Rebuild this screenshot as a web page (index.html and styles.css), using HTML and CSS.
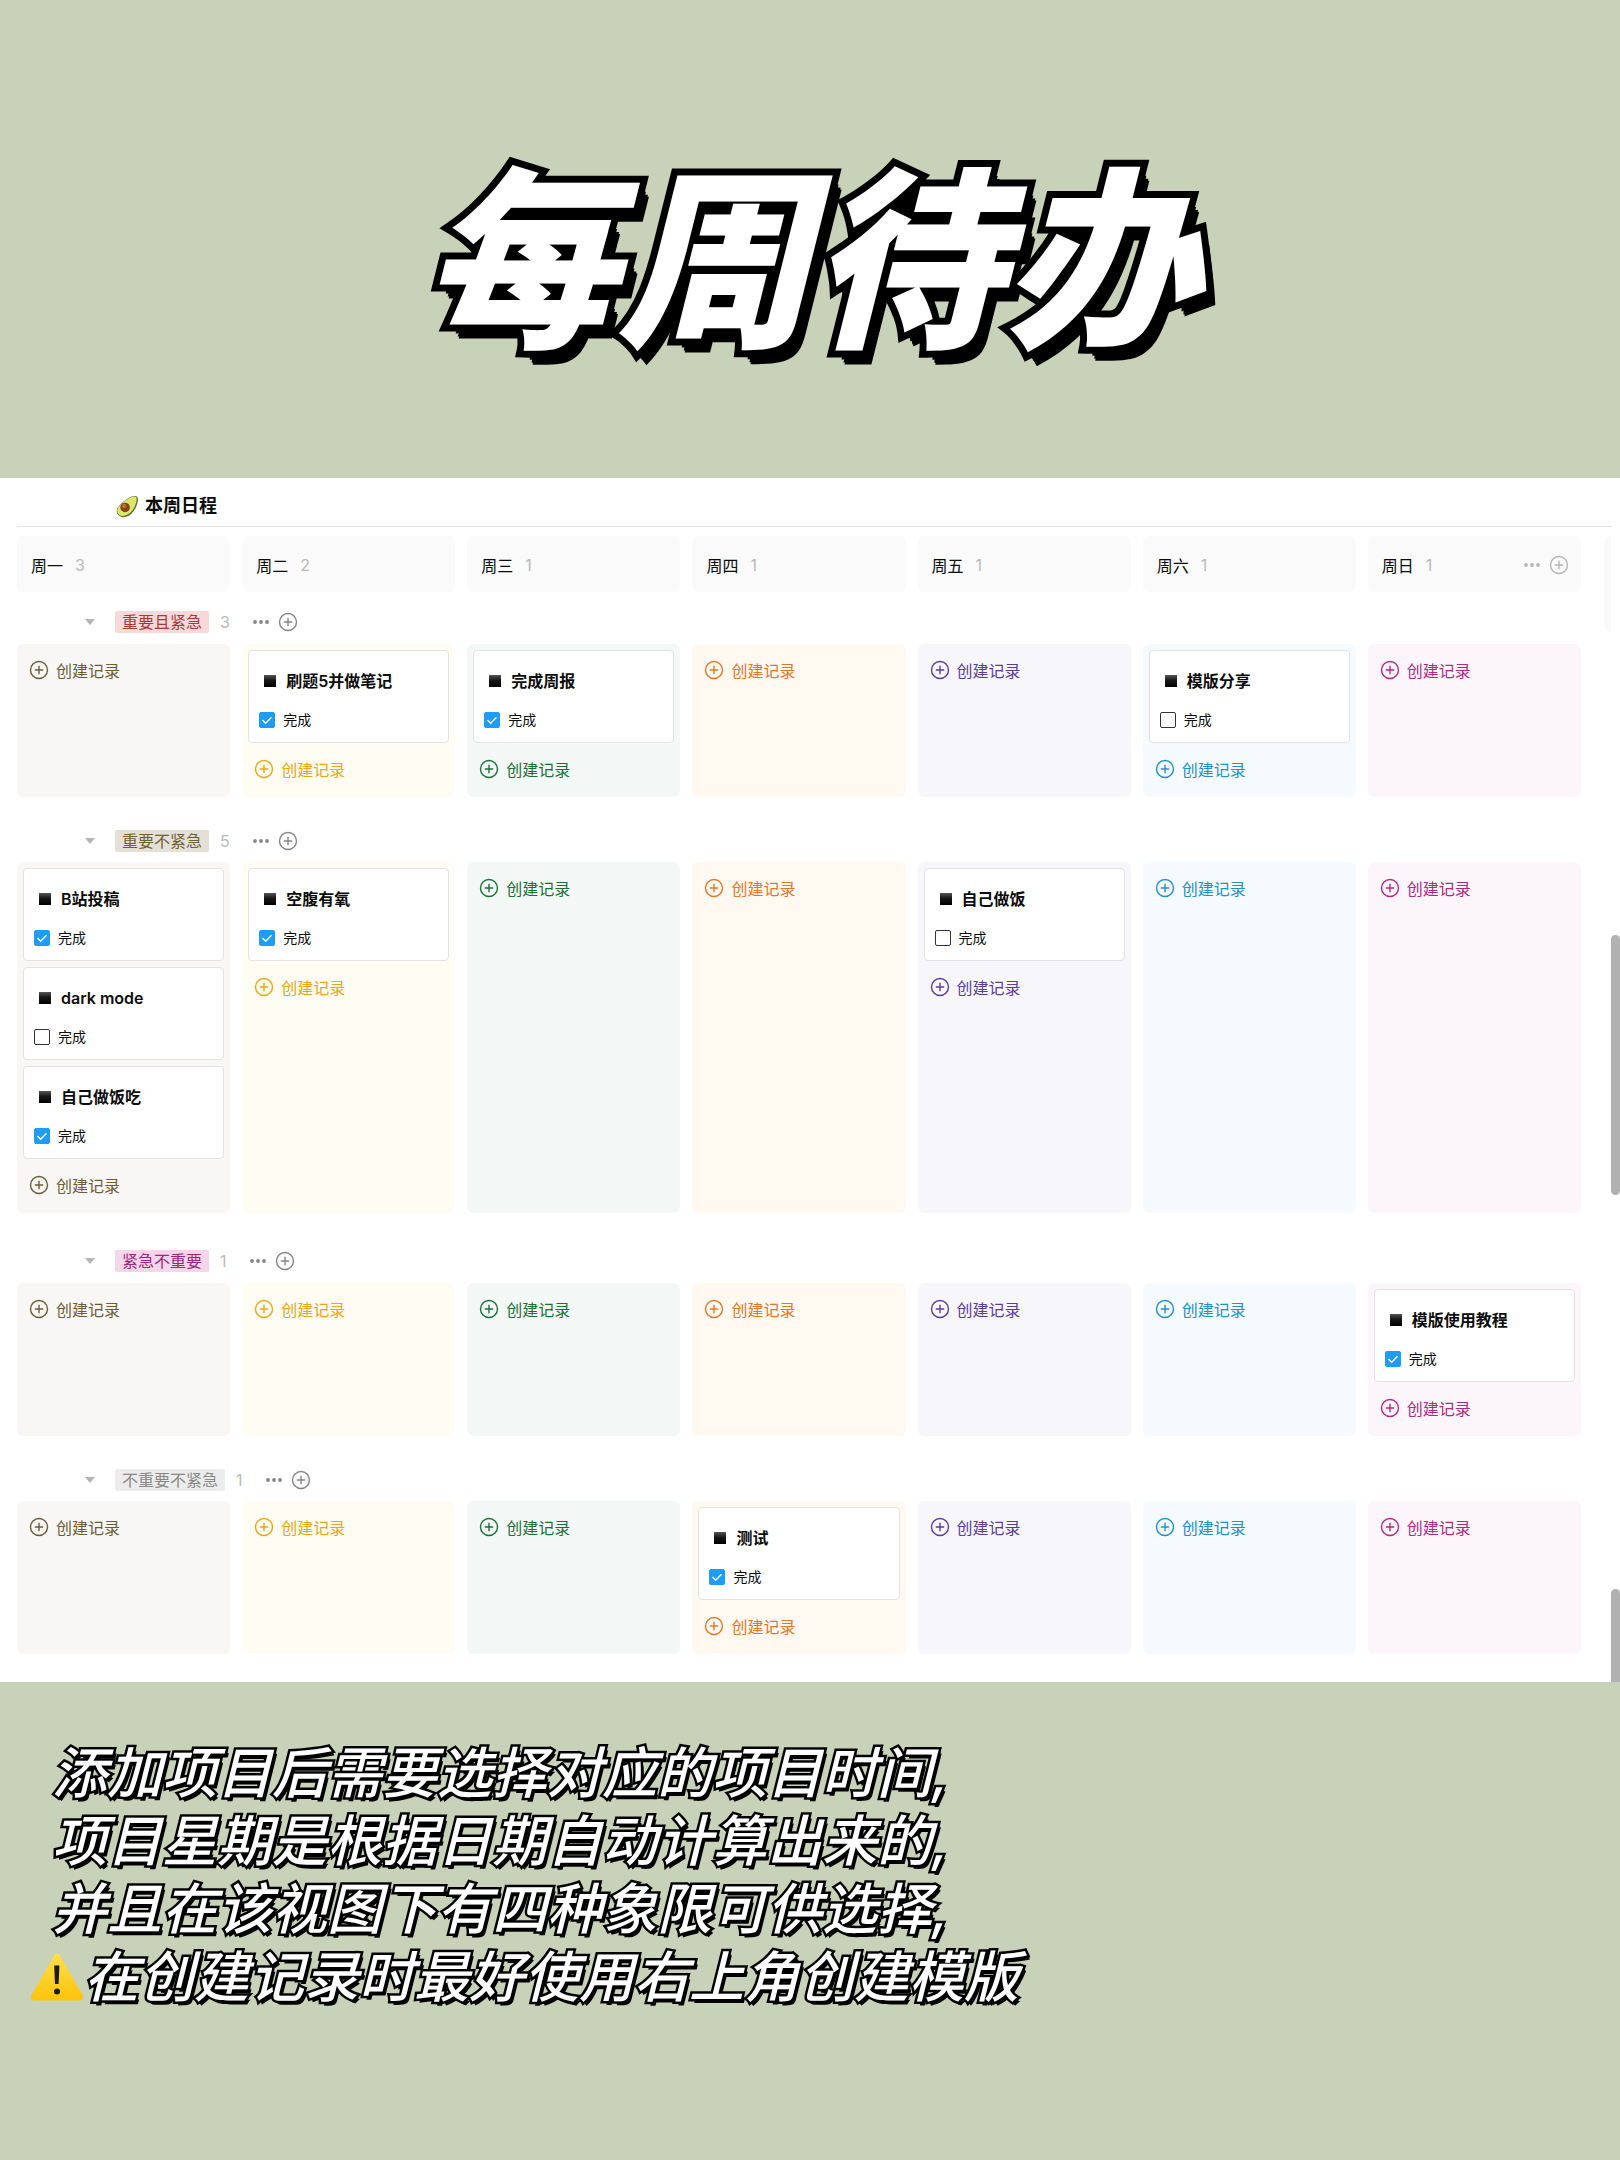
FILE: index.html
```html
<!DOCTYPE html>
<html lang="zh-CN">
<head>
<meta charset="utf-8">
<title>每周待办</title>
<link rel="stylesheet" href="styles.css">
</head>
<body>
<svg class="sprite" aria-hidden="true">
  <symbol id="plus" viewBox="0 0 20 20"><circle cx="10" cy="10" r="8.5"/><path d="M10 5.8v8.4M5.8 10h8.4"/></symbol>
  <symbol id="dots" viewBox="0 0 18 18"><circle cx="3" cy="9" r="1.9"/><circle cx="9" cy="9" r="1.9"/><circle cx="15" cy="9" r="1.9"/></symbol>
  <symbol id="caret" viewBox="0 0 10 8"><path d="M0 1h10L5 7z"/></symbol>
  <symbol id="block" viewBox="0 0 12 12"><rect width="12" height="12" fill="url(#ink)"/></symbol>
  <linearGradient id="ink" x1="0" y1="0" x2="0" y2="1"><stop offset="0" stop-color="#555"/><stop offset=".45" stop-color="#161616"/><stop offset="1" stop-color="#000"/></linearGradient>
</svg>
<header class="hero"><h1 class="hero-title">每周待办</h1></header>
<main class="panel">
  <div class="panel-head">
    <svg class="avocado" viewBox="0 0 24 24" aria-hidden="true">
      <path d="M20 1c3 0 3.500 3.500 2.300 7.500-1 3-1.800 5.500-4 8.500C15 21.800 10 24 6 23c-4-1-6-4-5-7.800C2 11.500 5 9 8.500 6.500 12 4 15.500.800 20 1z" fill="#5c7030"/>
      <path d="M19.500 1.500c2.500 0 2.500 3.500 1.400 6.800-1 3-2 5.500-4.200 8.200C13.500 20.300 9.500 22.500 6 21.800c-3.800-.8-5.400-3.400-4.500-6.800C2.500 11.500 5.500 9 8.500 7 12 4.500 15 1.500 19.500 1.500z" fill="#dce56c"/>
      <circle cx="9.500" cy="13" r="5" fill="#8a4318"/><circle cx="8.500" cy="11.500" r="2.200" fill="#b97346"/>
    </svg>
    <h2 class="panel-title">本周日程</h2>
  </div>
  <div class="board" id="board"></div>
  <span class="thumb thumb-main"></span>
  <span class="thumb thumb-page"></span>
  <span class="next-column"></span>
</main>
<footer class="notes">
  <p class="note">添加项目后需要选择对应的项目时间,</p>
  <p class="note">项目星期是根据日期自动计算出来的,</p>
  <p class="note">并且在该视图下有四种象限可供选择,</p>
  <p class="note note-warn">
    <svg class="warn" viewBox="0 0 54 50" aria-hidden="true">
      <defs><linearGradient id="amber" x1="0" y1="0" x2="0" y2="1"><stop offset="0" stop-color="#ffe04a"/><stop offset="1" stop-color="#fdc30c"/></linearGradient></defs>
      <path d="M24.200 3.500q2.800-4.500 5.600 0L52.500 43q2 5-3 5.500h-45q-5-.5-3-5.500z" fill="url(#amber)"/>
      <path d="M24.200 13.500h5.200l-.8 18.500h-3.600z" fill="#1c1a10" stroke="none"/><circle cx="27" cy="39.500" r="3" fill="#1c1a10"/>
    </svg>在创建记录时最好使用右上角创建模版</p>
</footer>
<script src="board.js"></script>
</body>
</html>
```
FILE: board.js
```js
const days = [['周一', 3], ['周二', 2], ['周三', 1], ['周四', 1], ['周五', 1], ['周六', 1], ['周日', 1]];
const tones = ['sand', 'yellow', 'green', 'orange', 'purple', 'blue', 'pink'];
// Each card is [title, done], keyed by the index of its day.
const groups = [
  { name: '重要且紧急', tag: 'red', count: 3, cards: { 1: [['刷题5并做笔记', true]], 2: [['完成周报', true]], 5: [['模版分享', false]] } },
  { name: '重要不紧急', tag: 'olive', count: 5, cards: { 0: [['B站投稿', true], ['dark mode', false], ['自己做饭吃', true]], 1: [['空腹有氧', true]], 4: [['自己做饭', false]] } },
  { name: '紧急不重要', tag: 'magenta', count: 1, cards: { 6: [['模版使用教程', true]] } },
  { name: '不重要不紧急', tag: 'gray', count: 1, cards: { 3: [['测试', true]] } },
];

const icon = (name) => `<svg class="icon icon-${name}" aria-hidden="true"><use href="#${name}"/></svg>`;
const tools = `<button class="tool" aria-label="更多">${icon('dots')}</button><button class="tool" aria-label="添加">${icon('plus')}</button>`;

const card = ([title, done]) => `
  <article class="card">
    <h3 class="card-title">${icon('block')}${title}</h3>
    <label class="check"><input class="check-box" type="checkbox"${done ? ' checked' : ''}>完成</label>
  </article>`;

const lane = (tone, cards = []) => `
  <div class="lane lane-${tone}">${cards.map(card).join('')}
    <button class="create">${icon('plus')}创建记录</button>
  </div>`;

const dayRow = days.map(([day, n], i) => `
  <div class="day"><span>${day}</span><span class="count">${n}</span>${i === 6 ? `<span class="day-tools">${tools}</span>` : ''}</div>`).join('');

const group = (g) => `
  <section class="group">
    <div class="group-head">
      <button class="fold" aria-label="折叠">${icon('caret')}</button>
      <span class="tag tag-${g.tag}">${g.name}</span><span class="count">${g.count}</span>
      <span class="group-tools">${tools}</span>
    </div>
    <div class="row">${tones.map((t, i) => lane(t, g.cards[i])).join('')}</div>
  </section>`;

document.getElementById('board').innerHTML = `<div class="row">${dayRow}</div>${groups.map(group).join('')}`;
```
FILE: styles.css
```css
* { box-sizing: border-box; }
body {
  margin: 0;
  min-height: 100vh;
  background: #c8d2b9;
  color: #0c0c0c;
  font-family: Inter, "Noto Sans CJK SC", sans-serif;
  font-size: 16px;
}
h1, h2, h3, p { margin: 0; }
button { border: 0; padding: 0; background: none; font: inherit; color: inherit; }
.sprite { position: absolute; width: 0; height: 0; }

.hero { height: 478px; padding-top: 108px; text-align: center; }
.hero-title {
  font: italic 900 194px/280px "Noto Sans CJK SC", sans-serif;
  color: #fff;
  -webkit-text-stroke: 14px #000;
  paint-order: stroke fill;
  text-shadow: 2px 3px #000, 4px 6px #000, 6px 9px #000, 8px 12px #000, 9px 14px #000;
}

.panel { position: relative; background: #fff; padding: 0 39px 28px 17px; }
.panel-head {
  display: flex;
  align-items: center;
  gap: 6px;
  height: 49px;
  margin-right: -31px;
  padding: 8px 0 0 99px;
  border-bottom: 1px solid #e3e3e3;
}
.avocado { width: 23px; height: 23px; }
.panel-title { font-size: 18px; line-height: 24px; font-weight: 700; }

.board { padding-top: 9px; }
.row { display: grid; grid-template-columns: repeat(7, 1fr); gap: 12px; }
.day {
  display: flex;
  align-items: center;
  gap: 12px;
  height: 56px;
  padding: 2px 12px 0 14px;
  border-radius: 6px;
  background: #fafafa;
  font-weight: 400;
}
.count { color: #b9b9b9; font-weight: 400; }
.day-tools, .group-tools { display: flex; align-items: center; gap: 8px; }
.day-tools { margin-left: auto; color: #b5b5b5; }
.tool { display: flex; }
.icon { display: block; flex: none; }
.icon-plus { width: 20px; height: 20px; fill: none; stroke: currentColor; stroke-width: 1.4; }
.icon-dots { width: 18px; height: 18px; fill: currentColor; }
.icon-caret { width: 10px; height: 8px; fill: #b5b5b5; }
.icon-block { width: 12px; height: 12px; }

.group-head { display: flex; align-items: center; height: 65px; padding: 22px 0 0 68px; }
.group:first-of-type .group-head { height: 52px; padding-top: 8px; }
.group:nth-of-type(3) .group-head { height: 70px; padding-top: 26px; }
.fold { margin-right: 20px; }
.tag { margin-right: 11px; padding: 0 7px; border-radius: 2px; line-height: 22px; }
.tag-red { background: #f7d9da; color: #a8383c; }
.tag-olive { background: #e3e0d5; color: #6f6038; }
.tag-magenta { background: #f5d5ea; color: #97297a; }
.tag-gray { background: #ececec; color: #888; }
.group-tools { margin-left: 22px; color: #858585; }

.lane { display: flex; flex-direction: column; gap: 6px; min-height: 153px; padding: 6px 6px 8px; border-radius: 6px; }
.lane-sand { background: #f8f7f5; color: #6b5d38; }
.lane-yellow { background: #fffcf4; color: #e4a914; }
.lane-green { background: #f3f8f6; color: #1b7038; }
.lane-orange { background: #fff9f2; color: #e0782a; }
.lane-purple { background: #f7f6fb; color: #5c3d96; }
.lane-blue { background: #f4fafd; color: #2490c4; }
.lane-pink { background: #fcf6fa; color: #b02a80; }
.card {
  height: 93px;
  padding: 18px 10px 0;
  border: 1px solid #e3e3e3;
  border-radius: 4px;
  background: #fff;
  color: #0c0c0c;
}
.card-title { display: flex; align-items: center; gap: 10px; padding-left: 5px; font-size: 16px; line-height: 24px; font-weight: 600; }
.check { display: flex; align-items: center; gap: 8px; margin-top: 17px; font-size: 14px; line-height: 20px; font-weight: 400; }
.check-box { appearance: none; width: 16px; height: 16px; margin: 0; border: 1px solid #333; border-radius: 2px; }
.check-box:checked {
  border-color: #1e9cf8;
  background: #1e9cf8 url('data:image/svg+xml,<svg xmlns="http://www.w3.org/2000/svg" viewBox="0 0 14 14"><path d="M2.500 7l3.200 3.200L11.500 4.300" fill="none" stroke="white" stroke-width="1.400"/></svg>');
}
.create { display: flex; align-items: center; gap: 7px; height: 40px; padding-left: 6px; }

.thumb { position: absolute; right: 0; width: 9px; background: #b1b1b1; }
.thumb-main { top: 457px; height: 260px; border-radius: 5px; }
.thumb-page { bottom: 0; height: 93px; border-radius: 5px 5px 0 0; }
.next-column { position: absolute; top: 58px; right: 9px; width: 7px; height: 96px; border-radius: 6px 0 0 6px; background: #fafafd; }

.notes { padding: 57px 52px 140px; }
.note {
  font: italic 500 55px/68px Inter, "Noto Sans CJK SC", sans-serif;
  color: #fff;
  -webkit-text-stroke: 5px #000;
  paint-order: stroke fill;
  text-shadow: 2px 2px #000, 3px 4px #000;
}
.note-warn { display: flex; align-items: center; margin-left: -22px; }
.warn { width: 54px; height: 50px; }
```
